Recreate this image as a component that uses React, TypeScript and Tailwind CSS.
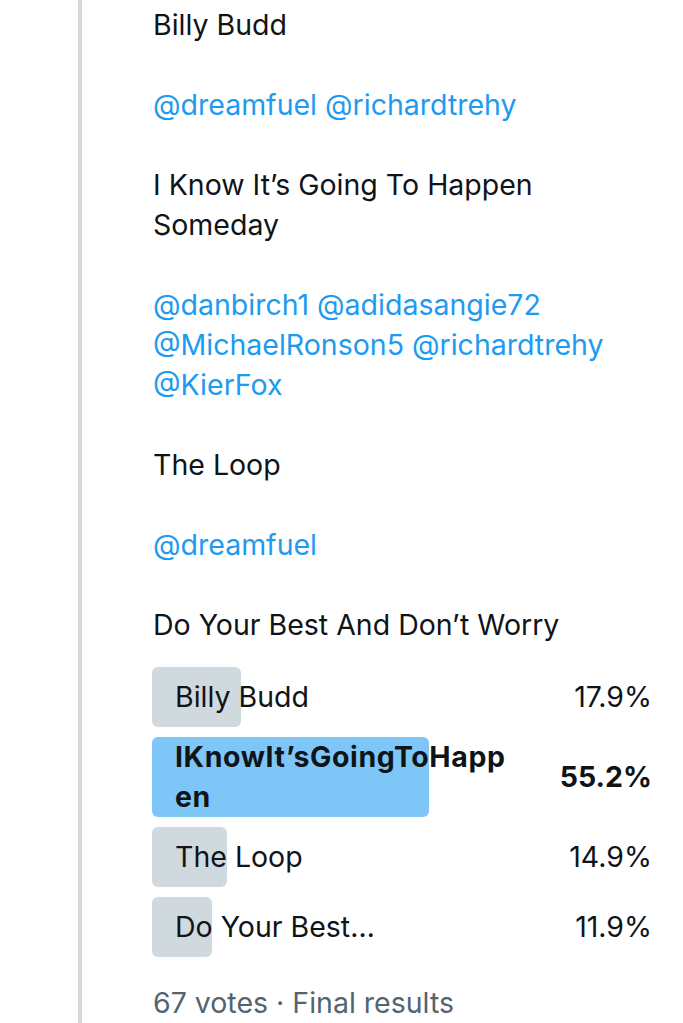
import React from "react";

const font = { fontFamily: "Inter, 'Noto Sans', sans-serif" };

function Bar({ label, pct, width }: { label: string; pct: string; width: number }) {
  return (
    <div className="relative flex items-center justify-between min-h-[60px]">
      <div className="absolute left-0 top-0 bottom-0 rounded-[6px] bg-[#cfd9de]" style={{ width }} />
      <div className="relative pl-[23px] pr-4 text-[28.5px] leading-[40px]">{label}</div>
      <div className="relative text-[28.5px] leading-[40px]">{pct}</div>
    </div>
  );
}

export default function App() {
  return (
    <div className="w-[683px] h-[1023px] bg-white overflow-hidden text-[#0f1419]" style={font}>
      <div className="flex h-full">
        <div className="ml-[78px] w-[4px] bg-[#cfd9de] h-full shrink-0" />
        <div className="ml-[71px] pr-[31px] flex-1 text-[28.5px] leading-[40px] pt-[5px]">
          <p>Billy Budd</p>
          <p className="h-[40px]" />
          <p className="text-[#1d9bf0]">@dreamfuel @richardtrehy</p>
          <p className="h-[40px]" />
          <p>I Know It’s Going To Happen<br />Someday</p>
          <p className="h-[40px]" />
          <p className="text-[#1d9bf0]">@danbirch1 @adidasangie72<br />@MichaelRonson5 @richardtrehy<br />@KierFox</p>
          <p className="h-[40px]" />
          <p>The Loop</p>
          <p className="h-[40px]" />
          <p className="text-[#1d9bf0]">@dreamfuel</p>
          <p className="h-[40px]" />
          <p>Do Your Best And Don’t Worry</p>
          <div className="mt-[22px] flex flex-col gap-[10px] -ml-[1px]">
            <Bar label="Billy Budd" pct="17.9%" width={89} />
            <div className="relative flex items-center justify-between min-h-[79px]">
              <div className="absolute left-0 top-0 bottom-0 rounded-[6px] bg-[#7ec6f7]" style={{ width: 277 }} />
              <div className="relative pl-[23px] text-[28.5px] leading-[40px] font-bold tracking-[0.6px]">IKnowIt’sGoingToHapp<br />en</div>
              <div className="relative text-[28.5px] leading-[40px] font-bold">55.2%</div>
            </div>
            <Bar label="The Loop" pct="14.9%" width={75} />
            <Bar label="Do Your Best…" pct="11.9%" width={60} />
          </div>
          <div className="mt-[26px] text-[#536471]">67 votes · Final results</div>
        </div>
      </div>
    </div>
  );
}
